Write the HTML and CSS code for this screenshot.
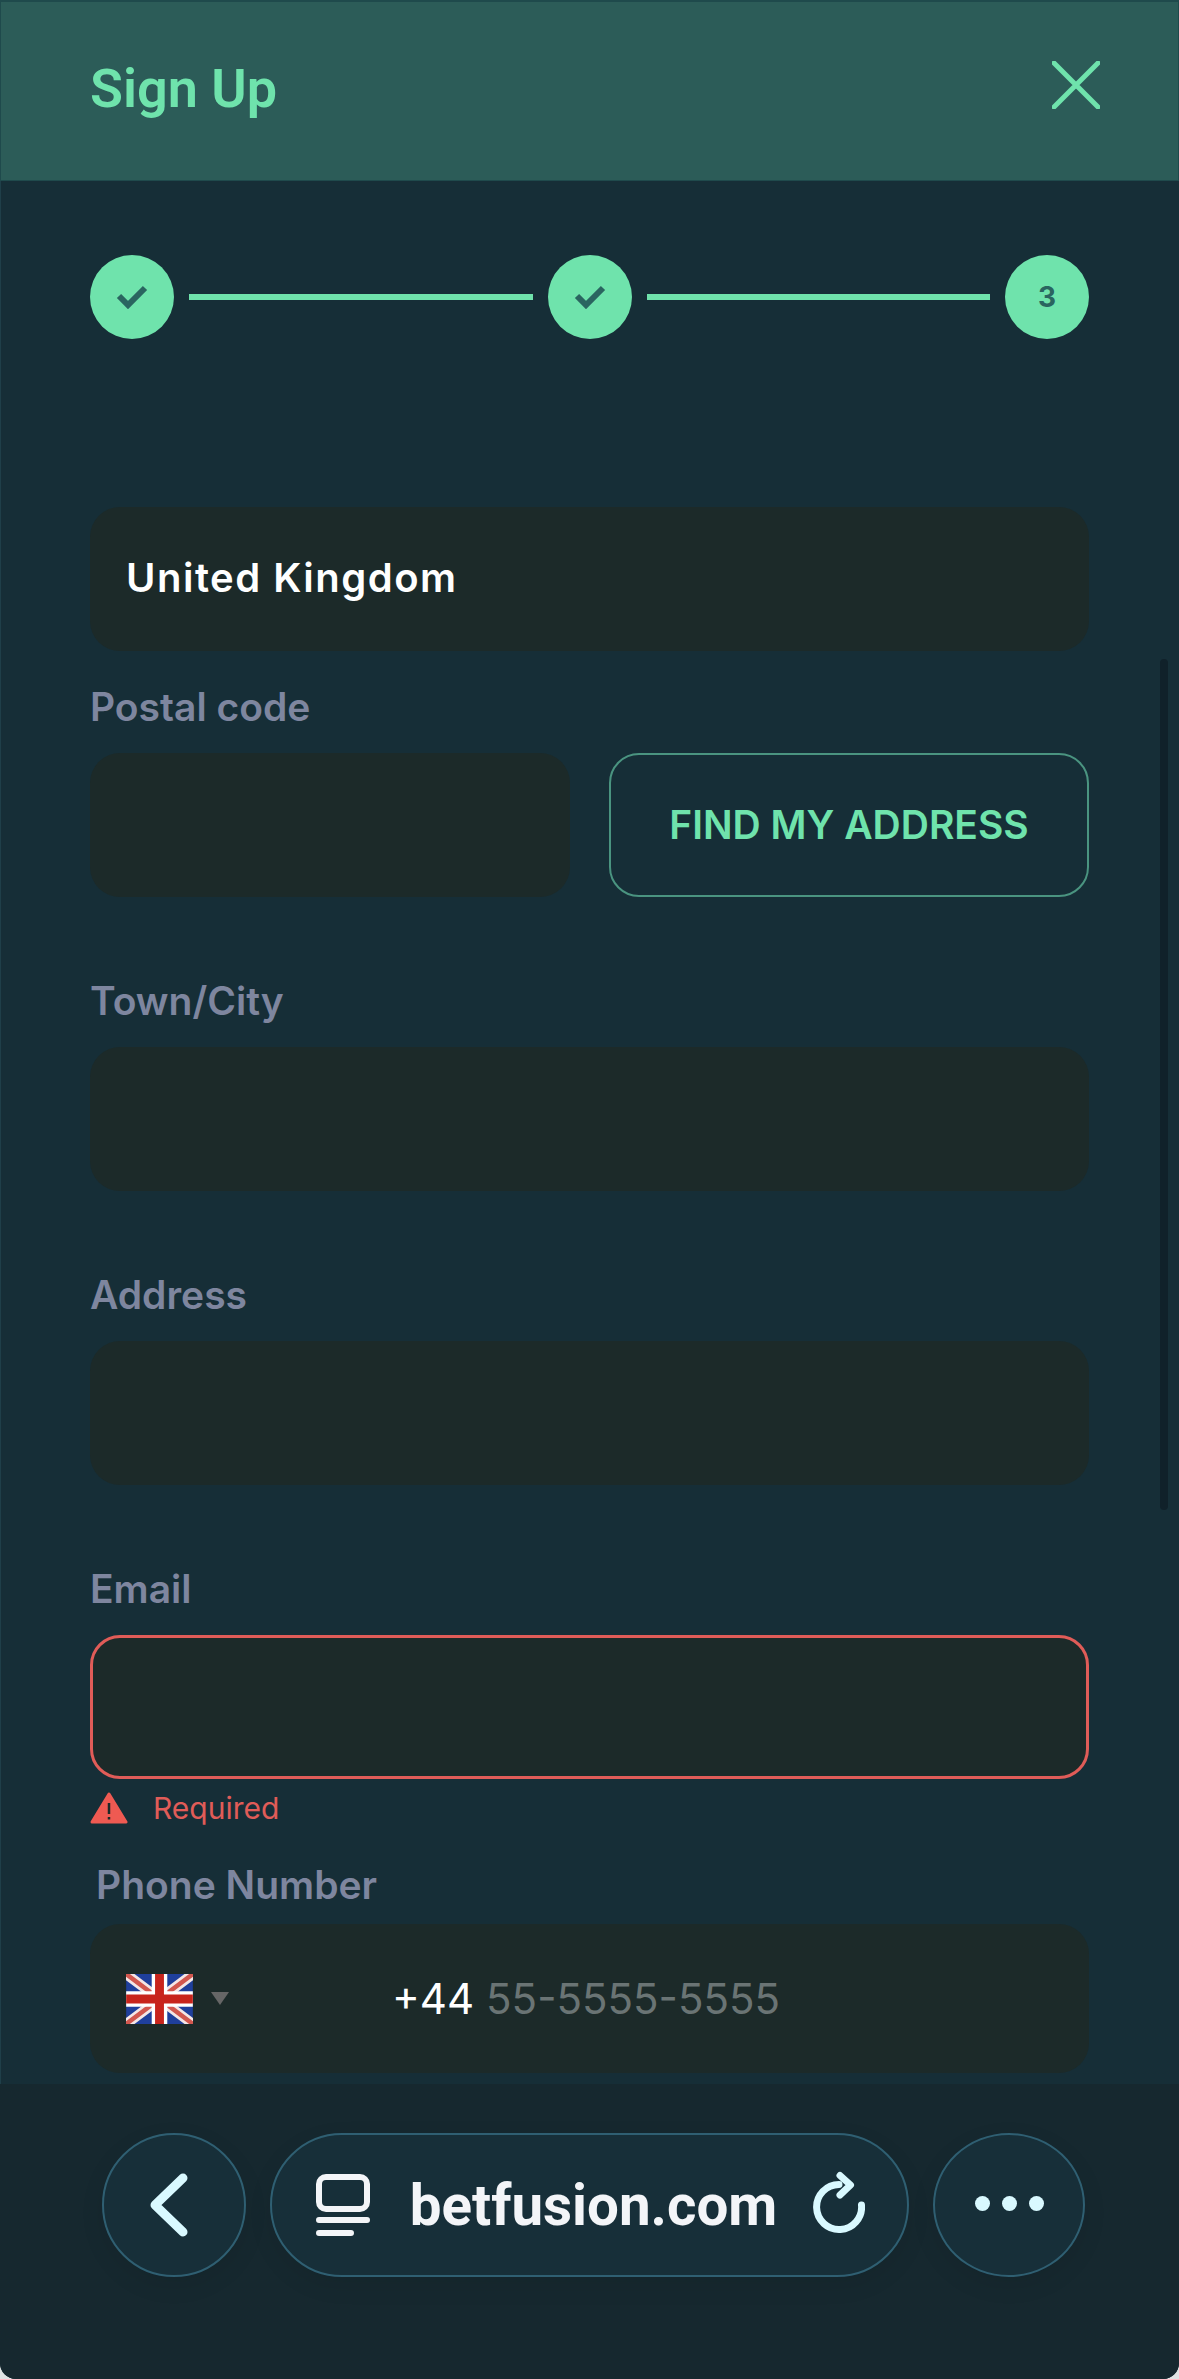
FILE: index.html

```html
<!DOCTYPE html>
<html lang="en">
<head>
  <meta charset="UTF-8">
  <title>Sign Up</title>
  <link rel="stylesheet" href="styles.css">
</head>
<body>

  <div class="app">
    <header class="top">
      <h1>Sign Up</h1>
      <button class="close" aria-label="Close">
        <svg width="48" height="48" viewBox="0 0 48 48"><path d="M2 2 L46 46 M46 2 L2 46" /></svg>
      </button>
    </header>

    <main class="form">
      <div class="steps">
        <div class="step">
          <svg width="32" height="24" viewBox="0 0 32 24"><path d="M3 11 L12 20 L29 3" /></svg>
        </div>
        <div class="step-line"></div>
        <div class="step">
          <svg width="32" height="24" viewBox="0 0 32 24"><path d="M3 11 L12 20 L29 3" /></svg>
        </div>
        <div class="step-line"></div>
        <div class="step">3</div>
      </div>

      <div class="box country">United Kingdom</div>

      <label class="label first">Postal code</label>
      <div class="postal-row">
        <div class="box"></div>
        <button class="find-btn">FIND MY ADDRESS</button>
      </div>

      <label class="label">Town/City</label>
      <div class="box"></div>

      <label class="label">Address</label>
      <div class="box"></div>

      <label class="label">Email</label>
      <div class="box error"></div>
      <div class="error-msg">
        <svg width="38" height="32" viewBox="0 0 38 32">
          <path class="tri" d="M19 2 L36 30 L2 30 Z" />
          <path class="bang" d="M19 11 L19 22 M19 25 L19 27.5" />
        </svg>
        <span>Required</span>
      </div>

      <label class="label phone-label">Phone Number</label>
      <div class="box phone">
        <svg class="flag" width="67" height="50" viewBox="0 0 60 45">
          <rect width="60" height="45" fill="#1f3f9c" />
          <path d="M0 0 L60 45 M60 0 L0 45" stroke="#f4e6e6" stroke-width="9" />
          <path d="M0 0 L60 45 M60 0 L0 45" stroke="#d2574f" stroke-width="4" />
          <path d="M30 0 V45 M0 22.5 H60" stroke="#fff" stroke-width="14" />
          <path d="M30 0 V45 M0 22.5 H60" stroke="#c8241c" stroke-width="8" />
        </svg>
        <span class="caret"></span>
        <span class="code">+44</span>
        <span class="hint">55-5555-5555</span>
      </div>

      <div class="scrollbar"></div>
    </main>

    <footer class="browser">
      <button class="round back" aria-label="Back">
        <svg width="42" height="68" viewBox="0 0 42 68"><path d="M34 7 L6 34 L34 61" /></svg>
      </button>
      <div class="url">
        <svg class="tab-icon" width="54" height="62" viewBox="0 0 54 62">
          <rect x="3" y="3" width="48" height="32" rx="7" />
          <path d="M3 46 H51 M3 59 H35" />
        </svg>
        <span>betfusion.com</span>
        <svg class="reload" width="54" height="64" viewBox="0 0 54 64">
          <path d="M50.500 35 A22.500 22.500 0 1 1 28 14.500 M29 5.500 L39.500 15 L29 25" />
        </svg>
      </div>
      <button class="round more" aria-label="More">
        <i></i><i></i><i></i>
      </button>
    </footer>
  </div>

</body>
</html>
```

FILE: styles.css

```css
* { box-sizing: border-box; }
html, body {
  margin: 0;
  padding: 0;
  background: #dfe3e4;
}
.app {
  width: 1179px;
  height: 2379px;
  display: flex;
  flex-direction: column;
  overflow: hidden;
  border-radius: 0 0 16px 16px;
  background: #162e37;
  font-family: Inter, sans-serif;
}

/* header */
.top {
  height: 181px;
  flex: none;
  display: flex;
  justify-content: space-between;
  padding: 57px 78px 0 89px;
  background: #2c5c58;
  border: 1px solid #1f4a4c;
  border-top-width: 2px;
}
.top h1 {
  margin: 0;
  font-family: Roboto, sans-serif;
  font-size: 54px;
  line-height: 60px;
  font-weight: 600;
  color: #6fe3ac;
}
.close {
  width: 48px;
  height: 48px;
  margin-top: 2px;
  padding: 0;
  border: none;
  background: none;
}
.close path {
  fill: none;
  stroke: #6fe3ac;
  stroke-width: 5;
  stroke-linecap: round;
}

/* form */
.form {
  position: relative;
  flex: 1;
  min-height: 0;
  padding: 74px 90px 0 89px;
  overflow: hidden;
  border-left: 1px solid #1f3f49;
}
.steps {
  display: flex;
  align-items: center;
  gap: 15px;
  margin-bottom: 168px;
}
.step {
  width: 84px;
  height: 84px;
  flex: none;
  display: flex;
  align-items: center;
  justify-content: center;
  border-radius: 50%;
  background: #6fe3ac;
  color: #2a6560;
  font-size: 28px;
  font-weight: 700;
}
.step path {
  fill: none;
  stroke: #2a6560;
  stroke-width: 6;
}
.step-line {
  flex: 1;
  height: 6px;
  background: #6fe3ac;
}
.box {
  height: 144px;
  border-radius: 30px;
  background: #1c2a29;
}
.country {
  display: flex;
  align-items: center;
  padding: 0 0 3px 36px;
  font-size: 40px;
  letter-spacing: 1.5px;
  font-weight: 600;
  color: #fff;
}
.label {
  display: block;
  margin: 82px 0 24px;
  font-size: 39px;
  line-height: 43px;
  padding-bottom: 1px;
  font-weight: 600;
  color: #7e869f;
}
.label.first { margin-top: 34px; }
.postal-row {
  display: grid;
  grid-template-columns: 1fr 1fr;
  gap: 39px;
}
.find-btn {
  border: 2px solid #4a9480;
  border-radius: 30px;
  background: none;
  padding: 0 0 2px;
  font-family: Inter, sans-serif;
  font-size: 39px;
  font-weight: 600;
  color: #6fe3ac;
}
.box.error { border: 3px solid #e05c58; }
.error-msg {
  display: flex;
  align-items: center;
  gap: 25px;
  height: 32px;
  margin-top: 13px;
  font-size: 30px;
  color: #e05c58;
}
.tri { fill: #ef5a52; stroke: #ef5a52; stroke-width: 3; stroke-linejoin: round; }
.bang { fill: none; stroke: #1c2a29; stroke-width: 2.500; }
.label.phone-label {
  margin: 39px 0 17px 6px;
}
.box.phone {
  height: 149px;
  display: flex;
  align-items: center;
  padding-left: 36px;
  font-size: 42px;
}
.flag { flex: none; }
.caret {
  width: 0;
  height: 0;
  margin: 0 0 0 18px;
  border-left: 9px solid transparent;
  border-right: 9px solid transparent;
  border-top: 13px solid #666;
}
.code {
  margin-left: 163px;
  color: #fff;
}
.hint {
  margin-left: 12px;
  color: #6a7474;
}
.scrollbar {
  position: absolute;
  top: 478px;
  right: 11px;
  width: 8px;
  height: 851px;
  border-radius: 4px;
  background: #10212a;
}

/* browser bar */
.browser {
  height: 295px;
  flex: none;
  display: flex;
  align-items: flex-start;
  gap: 24px;
  padding: 49px 0 0 102px;
  background: #16282f;
}
.round, .url {
  height: 144px;
  border: 2px solid #2f5f72;
  background: #172f39;
  box-shadow: 0 8px 24px rgba(0, 0, 0, 0.08);
}
.round {
  width: 144px;
  flex: none;
  padding: 0;
  display: flex;
  align-items: center;
  justify-content: center;
  border-radius: 50%;
}
.back svg { margin-right: 8px; }
.round svg path {
  fill: none;
  stroke: #d9f9ff;
  stroke-width: 9;
  stroke-linecap: round;
  stroke-linejoin: round;
}
.round.more {
  width: 152px;
  gap: 12px;
  padding-bottom: 4px;
}
.more i {
  width: 15px;
  height: 15px;
  border-radius: 50%;
  background: #d9f9ff;
}
.url {
  width: 639px;
  flex: none;
  display: flex;
  align-items: center;
  padding: 0 42px 0 44px;
  border-radius: 72px;
  font-family: Roboto, sans-serif;
  font-size: 56.5px;
  font-weight: 700;
  color: #f3f5f8;
}
.url span {
  margin: 2px auto 0;
  position: relative;
  left: 3px;
}
.tab-icon rect, .tab-icon path {
  fill: none;
  stroke: #f3f5f8;
  stroke-width: 6;
  stroke-linecap: round;
}
.reload { margin-top: -6px; }
.reload path {
  fill: none;
  stroke: #d9f9ff;
  stroke-width: 7;
  stroke-linecap: round;
  stroke-linejoin: round;
}
```
